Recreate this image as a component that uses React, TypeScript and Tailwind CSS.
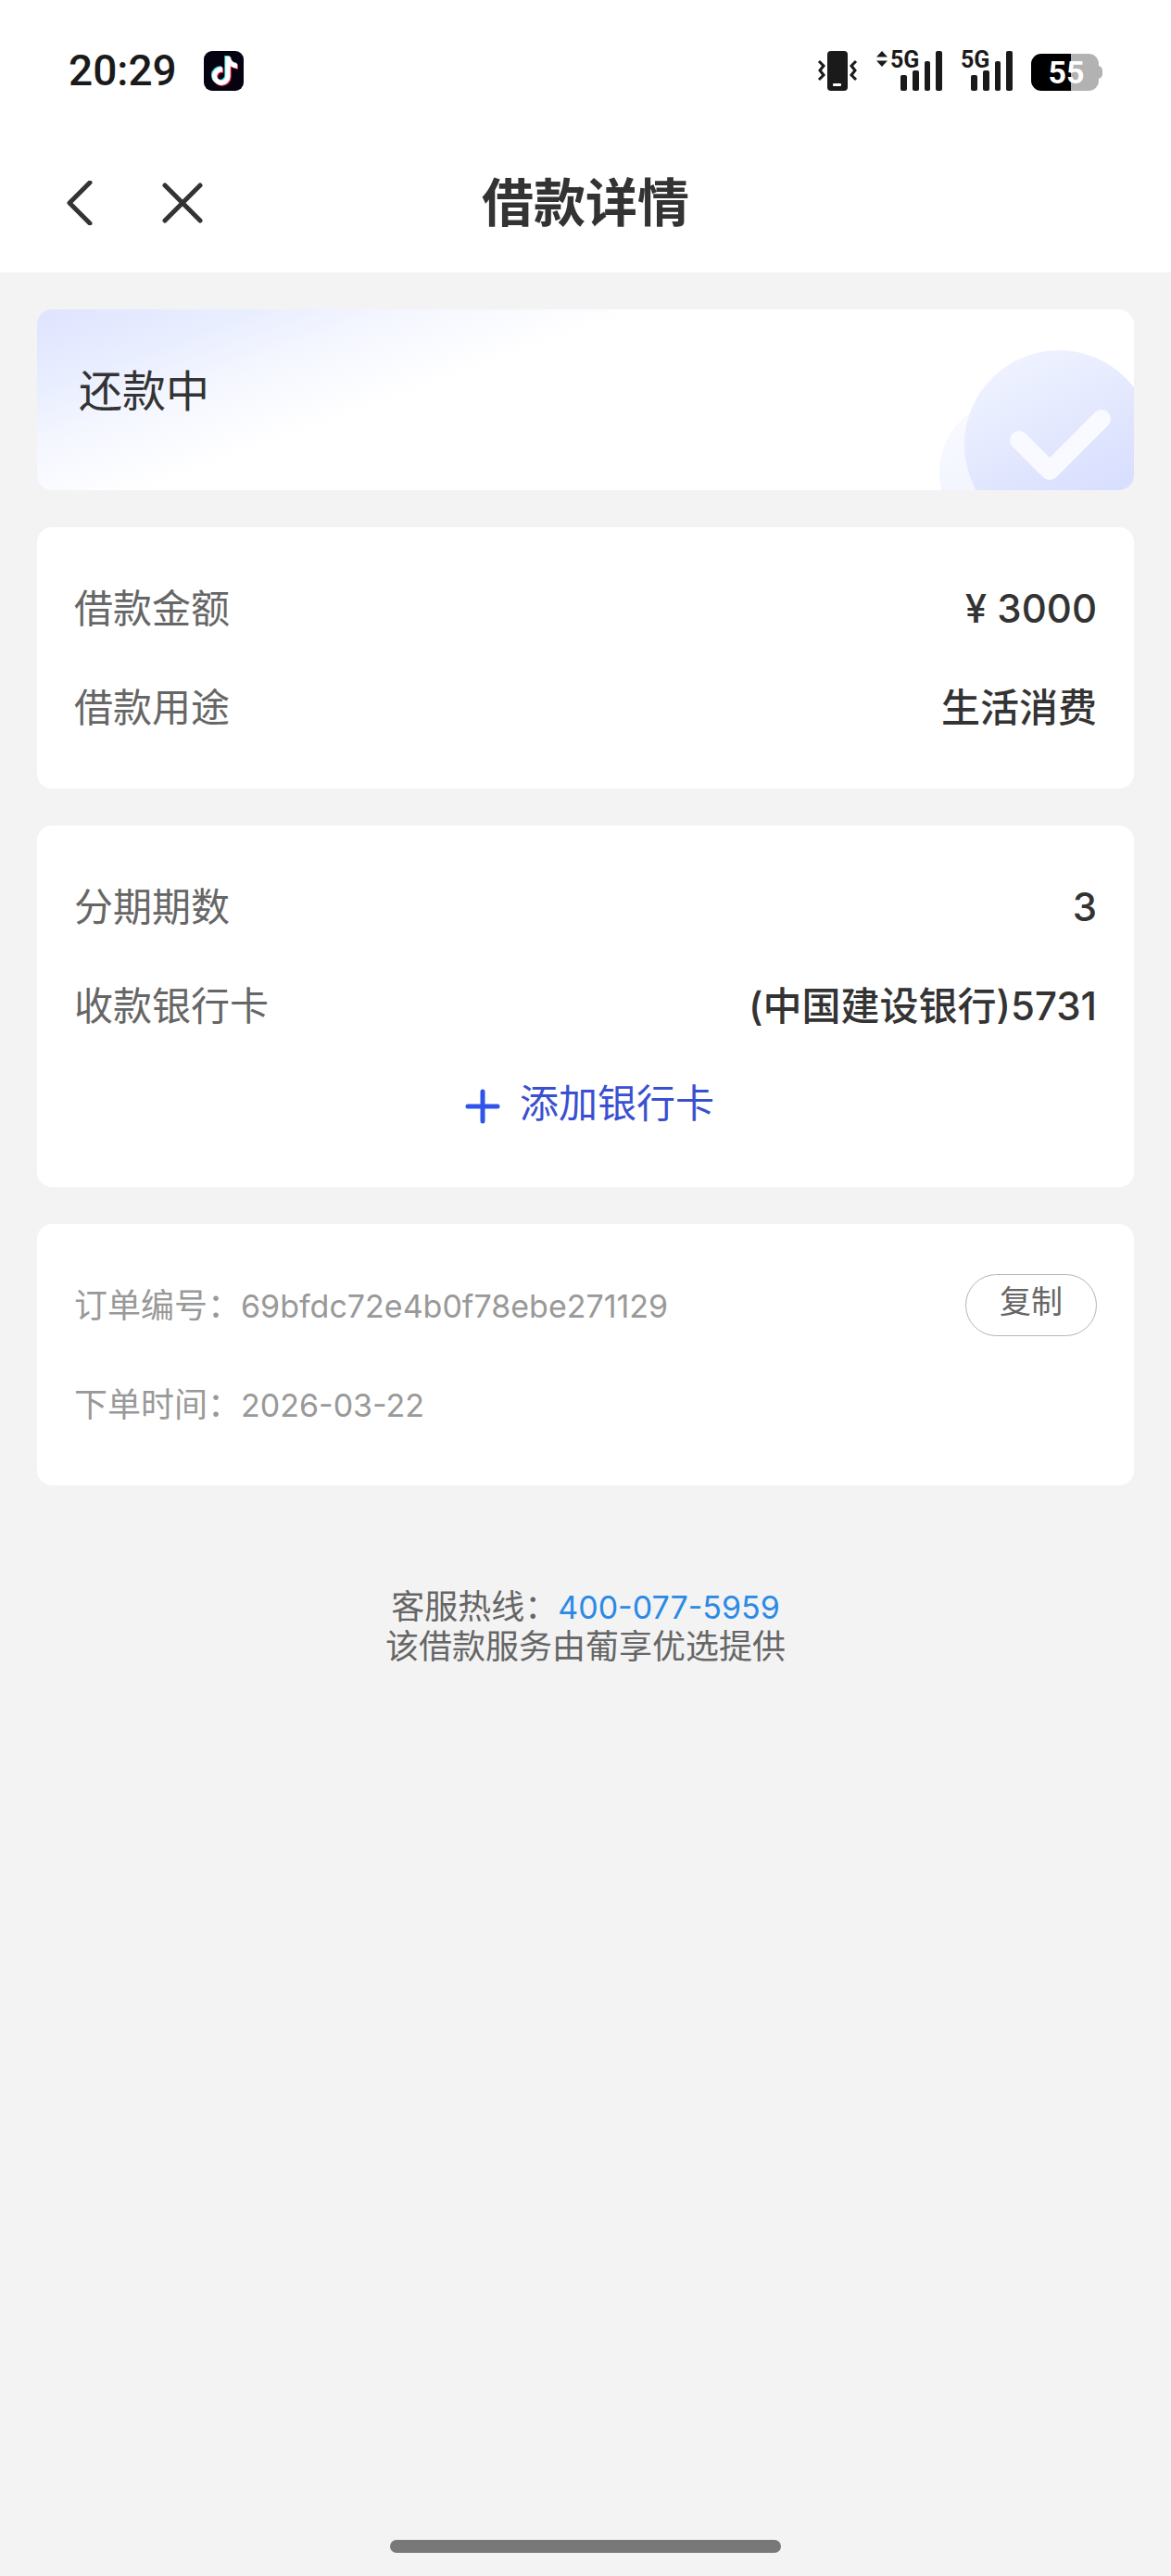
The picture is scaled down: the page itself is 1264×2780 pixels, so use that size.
import type { ReactNode } from "react";
import { FaTiktok } from "react-icons/fa6";

const SMALL_FONT = "font-['Liberation_Sans_Narrow','Roboto',sans-serif]";

function TikTokBadge() {
  return (
    <svg viewBox="0 0 43 43" className="size-[43px]" aria-label="TikTok">
      <rect width="43" height="43" rx="9" fill="#05030f" />
      <FaTiktok x="6" y="5" size={31} color="#35e6e0" />
      <FaTiktok x="8" y="7" size={31} color="#f0305c" />
      <FaTiktok x="7" y="6" size={31} color="#ffffff" />
    </svg>
  );
}

function VibrateIcon() {
  return (
    <svg viewBox="0 0 44 43" className="h-[43px] w-11" aria-hidden="true">
      <rect x="11" y="0" width="22" height="43" rx="4" fill="#1a1a1a" />
      <rect x="17" y="35" width="9" height="3" rx="1" fill="#fff" />
      <g fill="none" stroke="#1a1a1a" strokeWidth="3">
        <path d="M2 11l5 5-4 5 4 5-5 5" />
        <path d="M42 11l-5 5 4 5-4 5 5 5" />
      </g>
    </svg>
  );
}

function SignalBars({ arrows = false }: { arrows?: boolean }) {
  return (
    <div className="flex">
      {arrows && (
        <svg viewBox="0 0 15 43" className="h-[43px] w-[15px]" fill="#1a1a1a" aria-hidden="true">
          <path d="M6 0l6 6.500H0zM6 17l6-6.500H0z" />
        </svg>
      )}
      <svg viewBox="0 0 56 43" className={`h-[43px] w-14 overflow-visible ${SMALL_FONT}`} fill="#1a1a1a">
        <text x="0" y="18" fontSize="25" fontWeight="700">5G</text>
        <rect x="11" y="26" width="7" height="17" rx="2" />
        <rect x="24" y="21" width="7" height="22" rx="2" />
        <rect x="37" y="11" width="6" height="32" rx="2" />
        <rect x="49" y="0" width="7" height="43" rx="2" />
      </svg>
    </div>
  );
}

function Battery() {
  return (
    <svg viewBox="0 0 78 40" className="mt-[3px] h-10 w-[78px] overflow-visible font-['Roboto',sans-serif]">
      <rect x="64" y="13" width="13" height="14" rx="5" fill="#b2b2b2" />
      <path d="M43 0h19a11 11 0 0 1 11 11v18a11 11 0 0 1-11 11H43z" fill="#b2b2b2" />
      <path d="M43 0H11A11 11 0 0 0 0 11v18a11 11 0 0 0 11 11h32z" fill="#000" />
      <text x="38" y="32" textAnchor="middle" fontSize="34" fontWeight="700" fill="#fff">55</text>
    </svg>
  );
}

function StatusBar() {
  return (
    <div className="flex h-36 items-center justify-between pt-2 pr-[73px] pl-[74px]">
      <div className="flex items-center gap-[29px]">
        <span className="font-['Roboto',sans-serif] text-[46px] leading-none font-medium text-[#1a1a1a]">20:29</span>
        <TikTokBadge />
      </div>
      <div className="flex items-center gap-5">
        <VibrateIcon />
        <SignalBars arrows />
        <SignalBars />
        <Battery />
      </div>
    </div>
  );
}

function NavBar() {
  return (
    <div className="grid h-[150px] grid-cols-3 items-center">
      <div className="flex items-center gap-[61px] pl-[62px]">
        <button type="button" aria-label="返回">
          <svg viewBox="0 0 48 48" className="size-12" fill="none" stroke="#333" strokeWidth="5" strokeLinecap="round" strokeLinejoin="round">
            <path d="M35 2L13 24l22 22" />
          </svg>
        </button>
        <button type="button" aria-label="关闭">
          <svg viewBox="0 0 48 48" className="size-12" fill="none" stroke="#333" strokeWidth="5" strokeLinecap="round">
            <path d="M7 5l38 38M45 5L7 43" />
          </svg>
        </button>
      </div>
      <h1 className="text-center text-[56px] leading-none font-bold whitespace-nowrap text-[#333]">借款详情</h1>
    </div>
  );
}

function StatusBanner() {
  return (
    <section className="flex h-[195px] justify-between overflow-hidden rounded-2xl bg-[linear-gradient(160deg,#dfe3ff_0%,#e9eeff_14%,#f5f7ff_24%,#ffffff_38%)]">
      <h2 className="pt-16 pl-[45px] text-[47px] leading-[48px] text-[#333]">还款中</h2>
      <svg viewBox="0 0 214 154" className="h-[154px] w-[214px] self-end" aria-hidden="true">
        <defs>
          <linearGradient id="disc" x1="0.2" y1="0" x2="0.6" y2="0.8">
            <stop offset="0" stopColor="#f0f4ff" />
            <stop offset="1" stopColor="#d9dffe" />
          </linearGradient>
          <linearGradient id="discBack" x1="0" y1="0" x2="0" y2="1">
            <stop offset="0" stopColor="#fafbff" />
            <stop offset="1" stopColor="#eff2ff" />
          </linearGradient>
        </defs>
        <circle cx="84" cy="135" r="80" fill="url(#discBack)" />
        <circle cx="133" cy="105" r="102" fill="url(#disc)" />
        <path d="M90 100l33 33 56-56" fill="none" stroke="#f8faff" strokeWidth="20" strokeLinecap="round" strokeLinejoin="round" />
      </svg>
    </section>
  );
}

function Card({ children }: { children: ReactNode }) {
  return <section className="rounded-2xl bg-white px-10 py-[34px]">{children}</section>;
}

function Row({ label, value }: { label: string; value: string }) {
  return (
    <div className="flex h-[107px] items-center justify-between text-[42px]">
      <dt className="text-[#666]">{label}</dt>
      <dd className="font-medium text-[#333]">{value}</dd>
    </div>
  );
}

export default function App() {
  const orderNo = "69bfdc72e4b0f78ebe271129";

  return (
    <div className="flex min-h-screen flex-col bg-[#f3f3f3] font-['Inter','Noto_Sans_CJK_SC',sans-serif]" lang="zh-CN">
      <header className="bg-white">
        <StatusBar />
        <NavBar />
      </header>

      <main className="flex flex-1 flex-col gap-10 p-10">
        <StatusBanner />

        <Card>
          <dl>
            <Row label="借款金额" value="¥ 3000" />
            <Row label="借款用途" value="生活消费" />
          </dl>
        </Card>

        <Card>
          <dl>
            <Row label="分期期数" value="3" />
            <Row label="收款银行卡" value="(中国建设银行)5731" />
          </dl>
          <button type="button" className="mb-1.5 flex h-[102px] w-full items-center justify-center gap-5 text-[42px] text-[#3a50d0]">
            <svg viewBox="0 0 48 48" className="size-12" stroke="#2f55e8" strokeWidth="5" strokeLinecap="round" aria-hidden="true">
              <path d="M12 28h32M28 12v32" />
            </svg>
            添加银行卡
          </button>
        </Card>

        <Card>
          <div className="flex h-[107px] items-center justify-between">
            <p className="text-[36px] text-[#999]">
              订单编号：<span className="text-[34px]">{orderNo}</span>
            </p>
            <button
              type="button"
              onClick={() => navigator.clipboard?.writeText(orderNo)}
              className="flex h-[67px] w-[142px] items-center justify-center rounded-full border border-[#b5b5b5] pb-2 text-[34px] leading-none text-[#666]"
            >
              复制
            </button>
          </div>
          <div className="flex h-[107px] items-center">
            <p className="text-[36px] text-[#999]">
              下单时间：<span className="text-[34px]">2026-03-22</span>
            </p>
          </div>
        </Card>

        <footer className="pt-[70px] text-center text-[36px] leading-[43px] text-[#666]">
          <p>
            客服热线：<a href="tel:400-077-5959" className="text-[34px] text-[#2a8ae6]">400-077-5959</a>
          </p>
          <p>该借款服务由葡享优选提供</p>
        </footer>
      </main>

      <div className="flex justify-center pb-[25px]">
        <div className="h-3.5 w-1/3 rounded-full bg-[#787878]" />
      </div>
    </div>
  );
}
